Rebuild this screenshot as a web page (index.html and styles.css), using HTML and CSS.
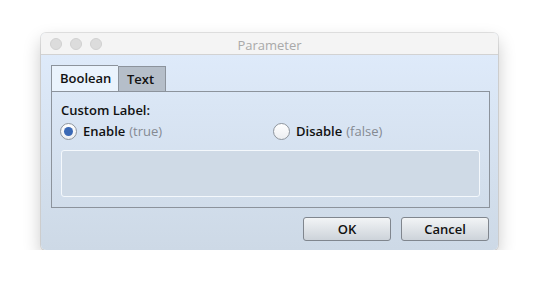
FILE: index.html
```html
<!DOCTYPE html>
<html>
<head>
<meta charset="utf-8">
<link rel="stylesheet" href="styles.css">
</head>
<body>
<div class="window">
  <div class="titlebar">
    <div class="lights"><span class="light"></span><span class="light"></span><span class="light"></span></div>
    <div class="title">Parameter</div>
  </div>
  <div class="content">
    <div class="tabs">
      <div class="tab active">Boolean</div>
      <div class="tab">Text</div>
    </div>
    <div class="panel">
      <div class="label">Custom Label:</div>
      <div class="radios">
        <div class="radio-item"><span class="radio checked"></span><b>Enable</b><span class="hint">(true)</span></div>
        <div class="radio-item second"><span class="radio"></span><b>Disable</b><span class="hint">(false)</span></div>
      </div>
      <div class="textbox"></div>
    </div>
    <div class="buttons">
      <button class="btn">OK</button>
      <button class="btn">Cancel</button>
    </div>
  </div>
</div>
</body>
</html>
```
FILE: styles.css
```css
* { box-sizing: border-box; }
html, body { margin: 0; padding: 0; background: #ffffff; }
body { font-family: "Open Sans", "Noto Sans", sans-serif; font-size: 13px; color: #111; }
.window {
  margin: 33px 0 0 41px;
  width: 457px;
  height: 217px;
  border-radius: 5px;
  overflow: hidden;
  background: linear-gradient(#e0ecfc, #cdd9e6);
  box-shadow: 0 0 0 1px rgba(0,0,0,0.10), 0 8px 18px rgba(0,0,0,0.22);
  display: flex;
  flex-direction: column;
}
.titlebar {
  height: 22px;
  background: #f4f4f4;
  border-bottom: 1px solid #d2d2d2;
  display: flex;
  align-items: center;
  position: relative;
}
.lights { display: flex; gap: 8px; padding-left: 9px; }
.light { width: 12px; height: 12px; border-radius: 50%; background: #dcdcdc; border: 1px solid #d0d0d0; }
.title { position: absolute; left: 0; right: 0; text-align: center; color: #a9a9a9; font-size: 13px; top: 3px; }
.content { padding: 10px 8px 0 10px; flex: 1; display: flex; flex-direction: column; }
.tabs { display: flex; align-items: flex-end; height: 26px; }
.tab {
  border: 1px solid #8c939c;
  border-bottom: none;
  padding: 0 8px;
  height: 25px;
  line-height: 24px;
  background: #b5bec9;
  font-weight: 600;
}
.tab.active { height: 26px; background: #eaf3fd; width: 67px; border-right: none; }
.tab:not(.active) { width: 48px; }
.panel {
  border: 1px solid #8c939c;
  height: 117px;
  padding: 10px 9px 9px 9px;
  display: flex;
  flex-direction: column;
}
.label { font-weight: 600; height: 17px; line-height: 17px; }
.radios { display: flex; height: 24px; align-items: center; margin-bottom: 7px; }
.radio-item { display: flex; align-items: center; gap: 4px; width: 213px; flex-shrink: 0; }
.radio-item b { font-weight: 600; }
.hint { color: #858a92; font-weight: 400; }
.radio {
  width: 17px; height: 17px; border-radius: 50%;
  border: 1px solid #8f969e;
  background: linear-gradient(#ffffff, #eceef1);
  margin-left: -1px;
  margin-right: 2px;
  display: flex; align-items: center; justify-content: center;
}
.radio.checked::after { content: ""; width: 9px; height: 9px; border-radius: 50%; background: #3b69b5; }
.textbox {
  height: 47px;
  border: 1px solid #f4f8fc;
  border-radius: 3px;
  background: #cfdae6;
}
.buttons { display: flex; justify-content: flex-end; gap: 10px; margin-top: 9px; padding-right: 1px; }
.btn {
  width: 88px; height: 24px;
  border: 1px solid #80868e;
  border-radius: 3px;
  background: linear-gradient(#f2f4f6, #cdd3da);
  font-family: inherit; font-size: 13px; font-weight: 600; color: #111;
  padding: 0;
}
```
